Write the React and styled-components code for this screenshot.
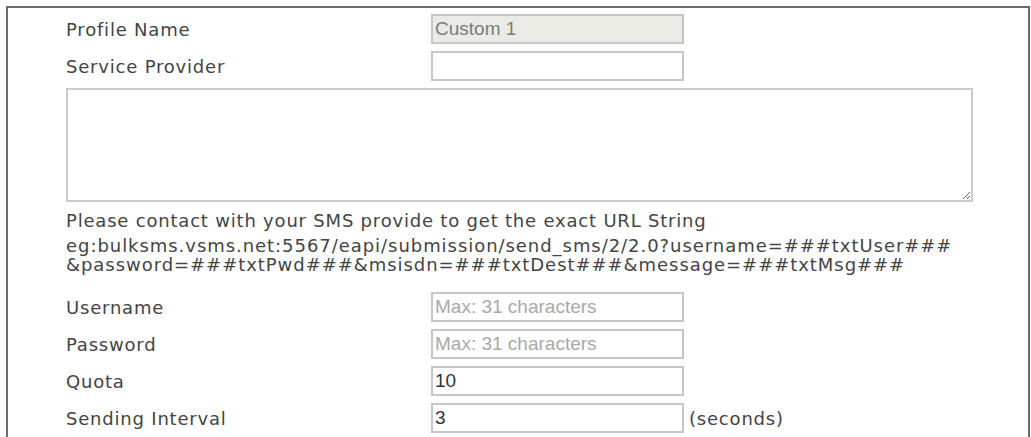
import React from 'react';
import styled, { createGlobalStyle } from 'styled-components';

const GlobalStyle = createGlobalStyle`
  html, body {
    margin: 0;
    padding: 0;
    background: #ffffff;
    overflow: hidden;
  }
`;

const Page = styled.div`
  padding: 6px 1px 0 6px;
  height: 437px;
  box-sizing: border-box;
`;

const Panel = styled.div`
  border: 2px solid #6a6a6a;
  border-bottom: none;
  height: 100%;
  box-sizing: border-box;
  padding: 6px 0 0 58px;
  display: flex;
  flex-direction: column;
  gap: 7px;
  font-family: 'DejaVu Sans', Verdana, sans-serif;
  font-size: 18px;
  letter-spacing: 0.8px;
  color: #444444;
`;

const Row = styled.div`
  display: flex;
  align-items: center;
  height: 30px;
`;

const Label = styled.div`
  width: 365px;
  flex: none;
  white-space: nowrap;
`;

const Field = styled.input`
  width: 253px;
  height: 30px;
  box-sizing: border-box;
  border: 2px solid #c6c6c6;
  border-radius: 0;
  padding: 0 2px;
  margin: 0;
  outline: none;
  font-family: 'Liberation Sans', Arial, sans-serif;
  font-size: 19px;
  letter-spacing: 0;
  color: ${(p) => (p.disabled ? '#7c7c7c' : '#333333')};
  background: ${(p) => (p.disabled ? '#ebebe6' : '#ffffff')};

  &::placeholder {
    color: #a9a9a9;
    opacity: 1;
  }
`;

const Unit = styled.span`
  margin-left: 5px;
`;

const UrlArea = styled.textarea`
  display: block;
  width: 907px;
  height: 114px;
  box-sizing: border-box;
  border: 2px solid #cbcbcb;
  border-radius: 0;
  margin: 0;
  padding: 2px;
  outline: none;
  resize: both;
  font-family: 'Liberation Sans', Arial, sans-serif;
  font-size: 16px;
`;

const Note = styled.div`
  display: flex;
  flex-direction: column;
  margin-bottom: 11px;
`;

const Hint = styled.div`
  line-height: 24px;
  white-space: nowrap;
`;

const Example = styled.div`
  margin-top: 3px;
  line-height: 19px;
  letter-spacing: 0.95px;
  white-space: nowrap;
`;

const topFields = [
  { label: 'Profile Name', value: 'Custom 1', disabled: true },
  { label: 'Service Provider', value: '' },
];

const bottomFields = [
  { label: 'Username', placeholder: 'Max: 31 characters' },
  { label: 'Password', placeholder: 'Max: 31 characters' },
  { label: 'Quota', value: '10' },
  { label: 'Sending Interval', value: '3', unit: '(seconds)' },
];

function FormRow({ label, value, placeholder, disabled, unit }) {
  return (
    <Row>
      <Label>{label}</Label>
      <Field
        type="text"
        defaultValue={value}
        placeholder={placeholder}
        disabled={disabled}
      />
      {unit && <Unit>{unit}</Unit>}
    </Row>
  );
}

export default function App() {
  return (
    <>
      <GlobalStyle />
      <Page>
        <Panel>
          {topFields.map((f) => (
            <FormRow key={f.label} {...f} />
          ))}
          <UrlArea defaultValue="" />
          <Note>
            <Hint>Please contact with your SMS provide to get the exact URL String</Hint>
            <Example>
              eg:bulksms.vsms.net:5567/eapi/submission/send_sms/2/2.0?username=###txtUser###
              <br />
              &amp;password=###txtPwd###&amp;msisdn=###txtDest###&amp;message=###txtMsg###
            </Example>
          </Note>
          {bottomFields.map((f) => (
            <FormRow key={f.label} {...f} />
          ))}
        </Panel>
      </Page>
    </>
  );
}
